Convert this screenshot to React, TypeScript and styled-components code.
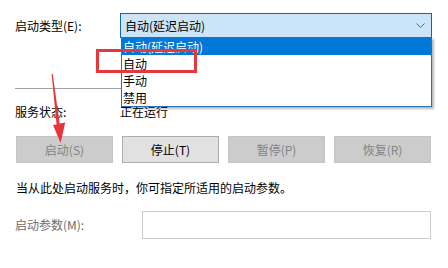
import React from 'react';
import styled, { createGlobalStyle, css } from 'styled-components';

const GlobalStyle = createGlobalStyle`
  html, body {
    margin: 0;
    padding: 0;
    background: #ffffff;
  }
  body {
    font-family: 'Noto Sans CJK SC', 'Noto Sans', 'DejaVu Sans', sans-serif;
    font-size: 12px;
    line-height: 16px;
    color: #000000;
  }
`;

const options = ['自动(延迟启动)', '自动', '手动', '禁用'];
const actions = [
  { label: '启动(S)', enabled: false },
  { label: '停止(T)', enabled: true },
  { label: '暂停(P)', enabled: false },
  { label: '恢复(R)', enabled: false },
];

const App: React.FC = () => {
  return (
    <>
      <GlobalStyle />
      <Page>
        <FieldRow>
          <Label width={105}>启动类型(E):</Label>
          <Combo>
            <span>自动(延迟启动)</span>
            <Chevron viewBox="0 0 9 5">
              <path d="M0.5 0.5 L4.5 4.5 L8.5 0.5" />
            </Chevron>
          </Combo>
        </FieldRow>

        <Divider />

        <FieldRow>
          <Label width={105}>服务状态:</Label>
          <span>正在运行</span>
        </FieldRow>

        <ButtonRow>
          {actions.map((a) => (
            <ActionButton key={a.label} enabled={a.enabled}>
              {a.label}
            </ActionButton>
          ))}
        </ButtonRow>

        <Hint>当从此处启动服务时，你可指定所适用的启动参数。</Hint>

        <FieldRow>
          <Label width={127} muted>
            启动参数(M):
          </Label>
          <ParamInput />
        </FieldRow>

        <DropList>
          {options.map((o, i) => (
            <Option key={o} selected={i === 0}>
              {o}
            </Option>
          ))}
        </DropList>

        <Marker />

        <Arrow viewBox="48 70 20 76">
          <polygon points="51.6,74 52.7,74 59.6,123.5 65.2,122.6 60.6,143 53,125 56.6,124.4" />
        </Arrow>
      </Page>
    </>
  );
};

const Page = styled.div`
  position: relative;
  width: 448px;
  height: 268px;
  box-sizing: border-box;
  padding: 13px 16px 0 15px;
  overflow: hidden;
`;

const FieldRow = styled.div`
  display: flex;
  align-items: center;
  margin-top: 15px;

  &:first-child {
    margin-top: 0;
  }

  &:last-of-type {
    margin-top: 34px;
  }
`;

const Label = styled.div<{ width: number; muted?: boolean }>`
  flex: none;
  width: ${({ width }) => width}px;
  color: ${({ muted }) => (muted ? '#6d6d6d' : '#000000')};
`;

const Combo = styled.div`
  flex: none;
  width: 312px;
  height: 25px;
  box-sizing: border-box;
  display: flex;
  align-items: center;
  justify-content: space-between;
  padding: 0 6px 0 4px;
  background: #cce4f7;
  border: 1px solid #1565a8;
`;

const Chevron = styled.svg`
  width: 9px;
  height: 5px;
  fill: none;
  stroke: #5a6470;
  stroke-width: 1;
`;

const Divider = styled.div`
  height: 1px;
  margin-top: 50px;
  width: 417px;
  background: #a0a0a0;
`;

const ButtonRow = styled.div`
  display: flex;
  gap: 9px;
  margin: 16px 1px 0 1px;
`;

const ActionButton = styled.div<{ enabled: boolean }>`
  flex: 1;
  height: 27px;
  box-sizing: border-box;
  display: flex;
  align-items: center;
  justify-content: center;

  ${({ enabled }) =>
    enabled
      ? css`
          background: #e1e1e1;
          border: 1px solid #adadad;
          color: #000000;
        `
      : css`
          background: #cccccc;
          border: 1px solid #c4c4c4;
          color: #838383;
        `}
`;

const Hint = styled.div`
  margin-top: 17px;
  padding-left: 1px;
`;

const ParamInput = styled.div`
  flex: none;
  width: 289px;
  height: 28px;
  box-sizing: border-box;
  background: #ffffff;
  border: 1px solid #cccccc;
`;

const DropList = styled.div`
  position: absolute;
  left: 121px;
  top: 37px;
  width: 311px;
  box-sizing: border-box;
  background: #ffffff;
  border: 1px solid #2a6fb0;
  box-shadow: 2px 2px 2px rgba(0, 0, 0, 0.28);
`;

const Option = styled.div<{ selected: boolean }>`
  height: 17px;
  line-height: 17px;
  padding-left: 1px;
  background: ${({ selected }) => (selected ? '#0078d7' : 'transparent')};
  color: ${({ selected }) => (selected ? '#ffffff' : '#000000')};
`;

const Marker = styled.div`
  position: absolute;
  left: 96px;
  top: 49px;
  width: 101px;
  height: 24px;
  box-sizing: border-box;
  border: 3px solid #e6373d;
`;

const Arrow = styled.svg`
  position: absolute;
  left: 48px;
  top: 70px;
  width: 20px;
  height: 76px;
  fill: #e8333c;
`;

export default App;
